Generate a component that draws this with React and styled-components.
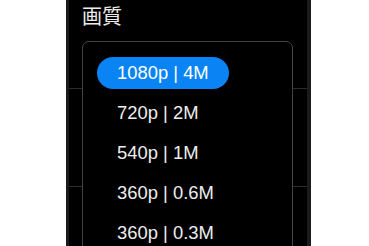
import React from "react";
import styled, { createGlobalStyle } from "styled-components";

const Global = createGlobalStyle`
  html, body { margin: 0; padding: 0; background: #ffffff; }
  body { font-family: "Liberation Sans", Arial, "Noto Sans CJK JP", sans-serif; }
`;

const Page = styled.div`
  width: 369px;
  height: 246px;
  overflow: hidden;
  padding-left: 66px;
  box-sizing: border-box;
`;

const Panel = styled.div`
  position: relative;
  width: 245px;
  height: 246px;
  box-sizing: border-box;
  background: #000;
  border-left: 3px solid #1b1b1b;
  border-right: 4px solid #1b1b1b;
  overflow: hidden;
`;

const Section = styled.div`
  height: ${(p) => p.$h}px;
  box-sizing: border-box;
  border-bottom: 1px solid #2c2c2c;
  padding: 4px 13px 0;
`;

const Title = styled.div`
  font-family: "Noto Sans CJK JP", sans-serif;
  font-size: 20px;
  line-height: 24px;
  color: #ececec;
`;

const Dropdown = styled.div`
  position: absolute;
  top: 41px;
  left: 13px;
  width: 211px;
  height: 260px;
  box-sizing: border-box;
  background: #000;
  border: 1.5px solid #444444;
  border-radius: 7px;
  padding: 14.5px 14px;
  display: flex;
  flex-direction: column;
  align-items: flex-start;
  gap: 8px;
`;

const Option = styled.div`
  height: 32px;
  line-height: 32px;
  padding: 0 20px;
  border-radius: 16px;
  font-size: 18.4px;
  white-space: nowrap;
  background: ${(p) => (p.$active ? "#0a84f5" : "transparent")};
  color: ${(p) => (p.$active ? "#ffffff" : "#eeeeee")};
`;

const options = [
  "1080p | 4M",
  "720p | 2M",
  "540p | 1M",
  "360p | 0.6M",
  "360p | 0.3M",
];

export default function App() {
  return (
    <>
      <Global />
      <Page>
        <Panel>
          <Section $h={89}>
            <Title>画質</Title>
          </Section>
          <Section $h={98} />
          <Section $h={98} />
          <Dropdown>
            {options.map((o, i) => (
              <Option key={o} $active={i === 0}>
                {o}
              </Option>
            ))}
          </Dropdown>
        </Panel>
      </Page>
    </>
  );
}
